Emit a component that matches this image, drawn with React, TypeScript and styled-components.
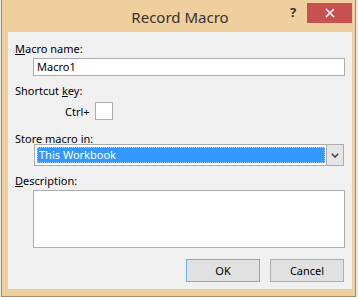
import * as React from 'react';
import styled, { createGlobalStyle } from 'styled-components';

const GlobalStyle = createGlobalStyle`
  html, body {
    margin: 0;
    padding: 0;
    background: #e8e8e8;
  }
  body {
    font-family: "Noto Sans", "Open Sans", sans-serif;
  }
`;

const Window = styled.div`
  box-sizing: border-box;
  width: 355px;
  height: 297px;
  margin-left: 1px;
  background: #f0cf9e;
  border: 1px solid #a88c5f;
  border-top: none;
  padding: 0 3px 7px 6px;
  display: flex;
  flex-direction: column;
`;

const TitleBar = styled.div`
  height: 32px;
  flex-shrink: 0;
  display: grid;
  grid-template-columns: 1fr auto 1fr;
  align-items: start;
`;

const Title = styled.div`
  grid-column: 2;
  padding-top: 7px;
  font-size: 15px;
  line-height: 20px;
  color: #333;
  white-space: nowrap;
`;

const Controls = styled.div`
  grid-column: 3;
  display: flex;
  justify-content: flex-end;
  align-items: flex-start;
`;

const HelpButton = styled.div`
  width: 14px;
  margin: 4px 7px 0 0;
  font-size: 13px;
  line-height: 16px;
  font-weight: bold;
  text-align: center;
  color: #333;
`;

const CloseButton = styled.div`
  width: 45px;
  height: 20px;
  margin-top: 3px;
  background: #c75050;
  display: flex;
  align-items: center;
  justify-content: center;
`;

const Client = styled.div`
  flex: 1;
  background: #f0f0f0;
  padding: 11px 7px 7px 7px;
  display: flex;
  flex-direction: column;
`;

const Label = styled.div<{ $gap: number }>`
  margin-top: ${p => p.$gap}px;
  font-size: 11px;
  line-height: 12px;
  color: #000;
  white-space: nowrap;
`;

const TextBox = styled.div<{ $gap: number; $height: number }>`
  box-sizing: border-box;
  margin: ${p => p.$gap}px 0 0 18px;
  height: ${p => p.$height}px;
  background: #fff;
  border: 1px solid #abadb3;
  padding: 0 3px;
  font-size: 11px;
  line-height: 16px;
  color: #000;
`;

const ShortcutRow = styled.div`
  margin: 5px 0 0 50px;
  height: 18px;
  display: flex;
  align-items: center;
  gap: 5px;
  font-size: 11px;
  color: #000;
`;

const KeyBox = styled.div`
  box-sizing: border-box;
  width: 18px;
  height: 18px;
  background: #fff;
  border: 1px solid #abadb3;
`;

const Combo = styled.div`
  box-sizing: border-box;
  margin: -1px 1px 0 19px;
  height: 22px;
  display: flex;
  background: #fff;
  border: 1px solid #acacac;
`;

const ComboValue = styled.div`
  flex: 1;
  margin: 2px 1px 2px 2px;
  padding-left: 2px;
  background: #3399ff;
  outline: 1px dotted #9fcaf5;
  outline-offset: -1px;
  font-size: 11px;
  line-height: 16px;
  color: #fff;
`;

const ComboArrow = styled.div`
  width: 16px;
  margin: -1px -1px -1px 0;
  background: #e5e5e5;
  border: 1px solid #acacac;
  display: flex;
  align-items: center;
  justify-content: center;
`;

const ButtonRow = styled.div`
  margin: 11px 1px 0 0;
  display: flex;
  justify-content: flex-end;
  gap: 10px;
`;

const Button = styled.div<{ $default?: boolean }>`
  box-sizing: border-box;
  width: 74px;
  height: 23px;
  background: #e1e1e1;
  border: 1px solid ${p => (p.$default ? '#6eaee8' : '#adadad')};
  display: flex;
  align-items: center;
  justify-content: center;
  font-size: 11px;
  color: #000;
`;

export default function App() {
  return (
    <>
      <GlobalStyle />
      <Window>
        <TitleBar>
          <Title>Record Macro</Title>
          <Controls>
            <HelpButton>?</HelpButton>
            <CloseButton>
              <svg width="10" height="10" viewBox="0 0 10 10">
                <path d="M1 1 L9 9 M9 1 L1 9" stroke="#fff" strokeWidth="1.6" />
              </svg>
            </CloseButton>
          </Controls>
        </TitleBar>
        <Client>
          <Label $gap={0}>
            <u>M</u>acro name:
          </Label>
          <TextBox $gap={3} $height={18}>Macro1</TextBox>
          <Label $gap={9}>
            Shortcut <u>k</u>ey:
          </Label>
          <ShortcutRow>
            <span>Ctrl+</span>
            <KeyBox />
          </ShortcutRow>
          <Label $gap={13}>
            Store macro <u>i</u>n:
          </Label>
          <Combo>
            <ComboValue>This Workbook</ComboValue>
            <ComboArrow>
              <svg width="8" height="5" viewBox="0 0 8 5">
                <path d="M0.8 0.8 L4 4 L7.2 0.8" stroke="#444" strokeWidth="1.6" fill="none" />
              </svg>
            </ComboArrow>
          </Combo>
          <Label $gap={9}>
            <u>D</u>escription:
          </Label>
          <TextBox $gap={3} $height={58} />
          <ButtonRow>
            <Button $default>OK</Button>
            <Button>Cancel</Button>
          </ButtonRow>
        </Client>
      </Window>
    </>
  );
}
